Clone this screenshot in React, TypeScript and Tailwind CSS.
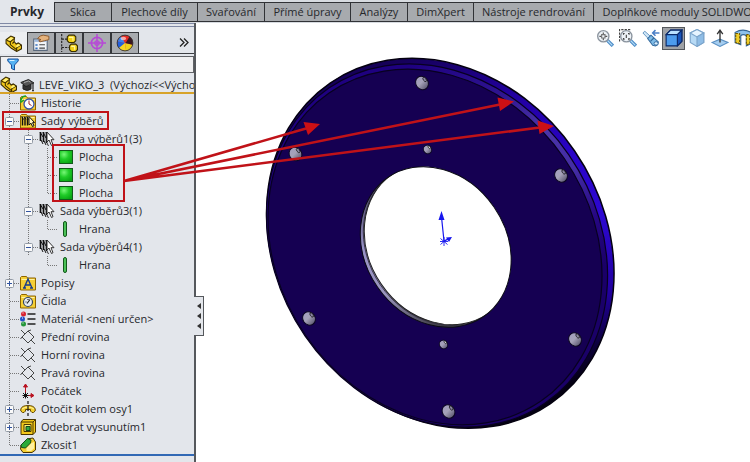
import type { ReactNode } from "react";

const tabs = [
  { label: "Skica", width: "w-[57px]" },
  { label: "Plechové díly", width: "w-[86px]" },
  { label: "Svařování", width: "w-[67px]" },
  { label: "Přímé úpravy", width: "w-[86px]" },
  { label: "Analýzy", width: "w-[57px]" },
  { label: "DimXpert", width: "w-[66px]" },
  { label: "Nástroje rendrování", width: "w-[120px]" },
  { label: "Doplňkové moduly SOLIDWORKS", width: "w-[187px]" },
];

function Icon({ size = 16, children }: { size?: number; children: ReactNode }) {
  return (
    <svg width={size} height={size} viewBox="0 0 16 16" className="block shrink-0" aria-hidden="true">
      {children}
    </svg>
  );
}

function PartIcon() {
  return (
    <Icon size={17}>
      <path d="M1 4.500 5.500 1 9 2.500 8.500 6l2 2.500 2-1 3 2V13l-4.500 2.500L6 12.500 1 8z" fill="#f2c81a" stroke="#3a2c00" />
      <path d="M1.500 5 5 6.500l3.500-3M5 6.500V9l5.500 4.500M8.500 6.500 7 8M11 12v3M11 12l4-2.500" fill="none" stroke="#3a2c00" />
      <path d="M2.500 4.500 5.500 2l2.500 1-3 2.500zM10 10.500l2.500-2 2 1.200-3 1.800z" fill="#fff17a" />
    </Icon>
  );
}

function CapIcon() {
  return (
    <Icon>
      <path d="M3 8v4q4.500 3 8 0V8L8 9.500z" fill="#333" stroke="#222" />
      <path d="M.8 5.500 8.500 2.500 14 6 6 9.500z" fill="#555" stroke="#222" />
      <path d="M13 6.500v6M12 13.500h2" stroke="#333" strokeWidth="1.300" />
      <path d="M4 5.500 8.500 4l2 1.200" stroke="#aaa" fill="none" />
    </Icon>
  );
}

function PropertyIcon() {
  return (
    <Icon size={18}>
      <path d="M1.500 4.500h12v10h-12z" fill="#f3f5f8" stroke="#59687c" />
      <path d="M2 5h11v2H2z" fill="#9db8dc" />
      <path d="M5 4q2-3 5-3l5 1v3l-4 1-4 1-1-1 2-1z" fill="#e5b27c" stroke="#875426" strokeWidth=".8" />
      <path d="M3 9h2v1.500H3zM3 12h2v1.500H3z" fill="#3872bd" />
      <path d="M6.500 9.500h5M6.500 12.500h5" stroke="#444" />
    </Icon>
  );
}

function ConfigIcon() {
  return (
    <Icon size={18}>
      <path d="M1.500 0v16M1.500 4.500H7M1.500 12H8" stroke="#222" fill="none" strokeDasharray="2 1" />
      <path d="M6.500 2.500 8 1h4.500L14 2.500V6l-1.500 1.500H8L6.500 6zM8.500 10.500 10 9h4l1.500 1.500V14L14 15.500h-4L8.500 14z" fill="#f2d21b" stroke="#382e00" />
      <path d="M8 3h3.500v3M10 11h3v3" stroke="#fff8a0" fill="none" />
    </Icon>
  );
}

function TargetIcon() {
  return (
    <Icon size={18}>
      <circle cx="8" cy="8" r="5" fill="none" stroke="#b649d6" strokeWidth="1.500" />
      <circle cx="8" cy="8" r="2" fill="none" stroke="#b649d6" />
      <path d="M8 0v16M0 8h16" stroke="#b649d6" strokeWidth="1.300" />
    </Icon>
  );
}

function AppearanceIcon() {
  return (
    <Icon size={18}>
      <circle cx="8" cy="8" r="7" fill="#e52b25" />
      <path d="M8 8 1.200 6.500A7 7 0 0 0 3 13z" fill="#2260dd" />
      <path d="M1.200 6.500A7 7 0 0 1 5 1.700L8 8z" fill="#3b83ec" />
      <path d="M8 8 2.500 12.500A7 7 0 0 0 9 15z" fill="#f6d623" />
      <path d="M8 8 9 15a7 7 0 0 0 5.800-5.500z" fill="#eed31a" />
      <path d="M8 8 14.800 9.500A7 7 0 0 0 11.500 2z" fill="#391822" />
      <path d="M4 2.500A7 7 0 0 1 12 2.500L8.500 8z" fill="#e52b25" />
      <circle cx="8" cy="8" r="7" fill="none" stroke="#333" strokeWidth=".8" />
      <ellipse cx="6.500" cy="4" rx="2.500" ry="1.500" fill="#fff" opacity=".6" />
    </Icon>
  );
}

function Folder() {
  return (
    <>
      <path d="M.5 2.500 1.500 1.500h5l1 1.500h8v12H.5z" fill="#f5cf35" stroke="#8e6500" />
      <path d="M1.500 4.500h13" stroke="#fff2a0" />
    </>
  );
}

function HistoryIcon() {
  return (
    <Icon>
      <Folder />
      <circle cx="9" cy="9" r="5" fill="#fff" stroke="#3451a5" strokeWidth="1.300" />
      <path d="M9 5.500V9l2.500 1.500" stroke="#9f2626" fill="none" />
      <path d="M1 5q1-4 5-4M0 4l1 3 3-2" fill="none" stroke="#18a52b" strokeWidth="1.500" />
    </Icon>
  );
}

function SetsFolderIcon() {
  return (
    <Icon>
      <Folder />
      <path d="M2.500 3.500v9M5 3.500v9M7.500 3.500v9" stroke="#111" strokeWidth="1.400" />
      <path d="m1.500 3.500 2 3M4 3.500l2 3M6.500 3.500l2 3" stroke="#111" />
      <path d="M9 3.500V12l2-1.800 1.500 3.300 1.500-.8-1.500-3 2-.2z" fill="#fff3c0" stroke="#111" />
    </Icon>
  );
}

function SetIcon() {
  return (
    <Icon>
      <path d="M1.500 1v9M4.500 1v10M7.500 1v11" stroke="#111" strokeWidth="1.700" />
      <path d="m1 1 3 5M4 1l3 6M7 1l3 6M2 9l2 4M5 10l2 4" stroke="#111" />
      <path d="M8 1v10l2-2 2.500 5.500 1.500-.8-2-5h3z" fill="#fff" stroke="#333" />
      <path d="m8 12 1.500 3" stroke="#333" />
    </Icon>
  );
}

function FaceIcon() {
  return (
    <Icon>
      <defs>
        <radialGradient id="face" cx="35%" cy="30%" r="75%">
          <stop offset="0" stopColor="#77f777" />
          <stop offset=".5" stopColor="#20cc28" />
          <stop offset="1" stopColor="#08a514" />
        </radialGradient>
      </defs>
      <rect x="1.500" y="1.500" width="13" height="13" fill="url(#face)" stroke="#12591b" />
    </Icon>
  );
}

function EdgeIcon() {
  return <Icon><rect x="5.500" y=".5" width="3" height="15" rx="1.500" fill="#4bc157" stroke="#12591b" /></Icon>;
}

function NotesIcon() {
  return (
    <Icon>
      <Folder />
      <path d="m4 13 4-9 4 9M5.500 10h5M3 13h3M10 13h3" stroke="#173c8c" fill="none" strokeWidth="1.400" />
    </Icon>
  );
}

function SensorIcon() {
  return (
    <Icon>
      <Folder />
      <circle cx="8" cy="9" r="4.500" fill="#e6edf5" stroke="#35455d" strokeWidth="1.200" />
      <path d="m7 10.500 3-4M5.500 9h1M8 6v1" stroke="#222" strokeWidth="1.200" />
    </Icon>
  );
}

function MaterialIcon() {
  return (
    <Icon>
      <path d="M7.500 3h8M7.500 8h8M7.500 13h8" stroke="#222" strokeWidth="1.500" />
      <circle cx="3.500" cy="3" r="2.500" fill="#d82330" />
      <circle cx="2.500" cy="8" r="2.500" fill="#2350c9" />
      <circle cx="3.500" cy="13" r="2.500" fill="#23963a" />
      <path d="M2.500 2h1M2 7h1M2.500 12h1" stroke="#fff" />
    </Icon>
  );
}

function PlaneIcon() {
  return (
    <Icon>
      <path d="m8 2 6 6-6 6-6-6zM1 1l4 4M11 11l4 4M8 2l3-1M2 8l-1.500 2" stroke="#333" fill="none" strokeWidth=".9" />
    </Icon>
  );
}

function OriginIcon() {
  return (
    <Icon>
      <path d="M5.500 12V2M5 12.500h8M3.500 4l2-3 2 3zM11 10.500l3 2-3 2z" fill="#b91422" stroke="#b91422" />
      <path d="m3 10 5 5M8 10l-5 5M5.500 9.500v6M2.500 12.500h6" stroke="#111" />
    </Icon>
  );
}

function RevolveIcon() {
  return (
    <Icon>
      <path d="M.8 8Q2 4.500 8 4.500T15.200 8v2l-1.700 1.500H12L10.500 10V8.500h-5V10L4 11.500H2.500L.8 10z" fill="#f4cf2c" stroke="#624600" />
      <path d="M2 8q6-4 12 0" stroke="#fff49d" fill="none" />
      <path d="M8 0v3M8 5v5M8 12v3" stroke="#111" strokeWidth="1.200" />
    </Icon>
  );
}

function CutIcon() {
  return (
    <Icon>
      <path d="M1 3 3 .5h12.500V13L13 15.500H1z" fill="#f3c91b" stroke="#493600" />
      <path d="M1 3h12v12.500M13 3l2.500-2.500" stroke="#493600" fill="none" />
      <path d="M4 5.500h7v7H4z" fill="#fff177" stroke="#493600" />
      <path d="M6 7.500h4v4H6z" fill="#33a843" stroke="#12491c" />
    </Icon>
  );
}

function ChamferIcon() {
  return (
    <Icon>
      <path d="M1 8 7 2l6-1 2.500 4v8L12 15.500H3L.5 12z" fill="#f5cf32" stroke="#493600" />
      <path d="M1 8 7.500 1.500 11 3l-.5 3-5 5-4-.5z" fill="#29aa38" stroke="#12491c" />
      <path d="m6.500 11 5-5 2.500-1v6.500L11 14H6.500z" fill="#fff0a0" />
    </Icon>
  );
}

type Guide = "none" | "line" | "tee" | "end" | "plus" | "minus";

function GuideCell({ kind, name }: { kind: Guide; name: string }) {
  if (kind === "none") return <span className="w-[19px]" />;
  const boxed = kind === "plus" || kind === "minus";
  const drawing = (
    <svg width="19" height="18" viewBox="0 0 19 18" className="block" aria-hidden="true">
      <path d={kind === "end" ? "M9.500 0v9" : "M9.500 0v18"} stroke="#777" strokeDasharray="1 1" />
      {kind !== "line" && <path d="M10 9.500h10" stroke="#777" strokeDasharray="1 1" />}
      {boxed && <rect x="5.500" y="5.500" width="8" height="8" rx="1" fill="#fafafa" stroke="#929aa5" />}
      {boxed && <path d={kind === "plus" ? "M7 9.500h5M9.500 7v5" : "M7 9.500h5"} stroke="#3154a0" />}
    </svg>
  );
  return boxed ? <button aria-label={name} className="w-[19px]">{drawing}</button> : <span className="w-[19px]">{drawing}</span>;
}

const rows: { label: string; icon: ReactNode; guides: Guide[] }[] = [
  { label: "Historie", icon: <HistoryIcon />, guides: ["tee"] },
  { label: "Sady výběrů", icon: <SetsFolderIcon />, guides: ["minus"] },
  { label: "Sada výběrů1(3)", icon: <SetIcon />, guides: ["line", "minus"] },
  { label: "Plocha", icon: <FaceIcon />, guides: ["line", "line", "tee"] },
  { label: "Plocha", icon: <FaceIcon />, guides: ["line", "line", "tee"] },
  { label: "Plocha", icon: <FaceIcon />, guides: ["line", "line", "end"] },
  { label: "Sada výběrů3(1)", icon: <SetIcon />, guides: ["line", "minus"] },
  { label: "Hrana", icon: <EdgeIcon />, guides: ["line", "line", "end"] },
  { label: "Sada výběrů4(1)", icon: <SetIcon />, guides: ["line", "minus"] },
  { label: "Hrana", icon: <EdgeIcon />, guides: ["line", "none", "end"] },
  { label: "Popisy", icon: <NotesIcon />, guides: ["plus"] },
  { label: "Čidla", icon: <SensorIcon />, guides: ["tee"] },
  { label: "Materiál <není určen>", icon: <MaterialIcon />, guides: ["tee"] },
  { label: "Přední rovina", icon: <PlaneIcon />, guides: ["tee"] },
  { label: "Horní rovina", icon: <PlaneIcon />, guides: ["tee"] },
  { label: "Pravá rovina", icon: <PlaneIcon />, guides: ["tee"] },
  { label: "Počátek", icon: <OriginIcon />, guides: ["tee"] },
  { label: "Otočit kolem osy1", icon: <RevolveIcon />, guides: ["plus"] },
  { label: "Odebrat vysunutím1", icon: <CutIcon />, guides: ["plus"] },
  { label: "Zkosit1", icon: <ChamferIcon />, guides: ["end"] },
];

const panelTabs = [
  { name: "Vlastnosti", icon: <PropertyIcon /> },
  { name: "Konfigurace", icon: <ConfigIcon /> },
  { name: "Kóty", icon: <TargetIcon /> },
  { name: "Vzhled", icon: <AppearanceIcon /> },
];

function Sidebar() {
  return (
    <aside className="flex w-[196px] shrink-0 flex-col border-r-2 border-[#55585c] bg-[#e3e6eb]">
      <div className="h-1 shrink-0 border-y border-[#8089a5]" />
      <div className="mt-1 flex h-[23px] shrink-0 items-end border-b border-[#3c3e42]">
        <button aria-label="Strom prvků" className="-mb-px flex h-[22px] w-[27px] items-center justify-center bg-[#eceef1]">
          <PartIcon />
        </button>
        {panelTabs.map((t) => (
          <button key={t.name} aria-label={t.name} className="flex h-[21px] w-7 items-center justify-center border-t border-r border-l border-[#34363a] bg-[#a8abaf]">
            {t.icon}
          </button>
        ))}
        <button aria-label="Další" className="ml-auto flex h-[21px] w-5 items-center justify-center">
          <svg width="10" height="9" viewBox="0 0 10 9" aria-hidden="true">
            <path d="m1 .5 4 4-4 4M5 .5l4 4-4 4" fill="none" stroke="#222" strokeWidth="1.300" />
          </svg>
        </button>
      </div>
      <label className="mt-0.5 flex h-[17px] shrink-0 items-center border border-[#606266] bg-[#f0f0f1] pl-1.5">
        <svg width="12" height="13" viewBox="0 0 12 13" aria-hidden="true">
          <path d="M.8 1h10.400v2L7.500 7v5l-3-1.500V7L.8 3z" fill="#55b2f2" stroke="#174f9c" />
          <path d="M2.500 2.500h5" stroke="#d5f1ff" />
        </svg>
        <input aria-label="Filtr" className="min-w-0 flex-1 bg-transparent outline-none" />
      </label>
      <div className="flex h-[21px] shrink-0 items-center overflow-hidden border-b-2 border-[#d7a329] pt-1">
        <PartIcon />
        <span className="mx-[3px]"><CapIcon /></span>
        <span className="whitespace-pre">LEVE_VIKO_3  (Výchozí&lt;&lt;Výchozí&gt;)</span>
      </div>
      <ul className="border-b-2 border-[#3269b5]">
        {rows.map((row, i) => (
          <li key={i} className="flex h-[18px] items-center whitespace-nowrap">
            {row.guides.map((g, j) => <GuideCell key={j} kind={g} name={row.label} />)}
            <span className="mr-[5px] ml-px">{row.icon}</span>
            <span>{row.label}</span>
          </li>
        ))}
      </ul>
    </aside>
  );
}

function ViewCube({ solid }: { solid?: boolean }) {
  return (
    <Icon size={18}>
      <path d={solid ? "M1 5 5 1h10v10l-4 4H1z" : "m8 .5 6 3v8.500l-6 3.500L2 12V3.500z"} fill={solid ? "#4d9ced" : "#b7daf5"} stroke={solid ? "#0a2868" : "#7ca5cb"} />
      <path d={solid ? "M1 5 5 1h10l-4 4z" : "m2 3.500 6-3 6 3L8 7z"} fill={solid ? "#b9e1ff" : "#e6f4ff"} stroke={solid ? "#0a2868" : "#7ca5cb"} />
      <path d={solid ? "M11 5v10l4-4V1z" : "M8 7v8.500l6-3.500V3.500z"} fill={solid ? "#1754bb" : "#8fbde6"} stroke={solid ? "#0a2868" : "#7ca5cb"} />
    </Icon>
  );
}

function Magnifier({ area }: { area?: boolean }) {
  return (
    <Icon size={18}>
      <path d="m10 10 5 5" stroke="#4d8cc7" strokeWidth="3" />
      <path d="m10 10 4.500 4.500" stroke="#b3dbf7" />
      {area && <path d="M.5 11V.5H11" fill="none" stroke="#444" strokeDasharray="2 1" />}
      <circle cx="6.500" cy="6.500" r="5" fill="#edf2f7" stroke="#8b949e" strokeWidth="1.200" />
      {area ? (
        <path d="M4 5V4h1M8 4h1v1M4 8v1h1M8 9h1V8M6.500 5v3" stroke="#444" fill="none" />
      ) : (
        <>
          <path d="M6.500 3v7M3 6.500h7" stroke="#555" />
          <path d="M5 5h3v3H5z" fill="#edf2f7" stroke="#777" />
        </>
      )}
    </Icon>
  );
}

function ViewToolbar() {
  const button = "flex size-[23px] shrink-0 items-center justify-center";
  return (
    <div className="flex h-[30px] items-center justify-end overflow-hidden">
      <div className="-mr-1 flex shrink-0">
        <button aria-label="Přizpůsobit" className={button}><Magnifier /></button>
        <button aria-label="Zvětšit oblast" className={button}><Magnifier area /></button>
        <button aria-label="Předchozí pohled" className={button}>
          <Icon size={18}>
            <path d="M.8 3.500 2.500 2 8 7l-2 2z" fill="#cfe6f7" stroke="#5b90bd" strokeWidth=".8" />
            <path d="m5 8.500 3-3 6.500 6-.5 2.500-2 1-2.500-.5z" fill="#7fbce8" stroke="#346a9d" strokeWidth=".9" />
            <path d="m7.500 11 3-3" stroke="#346a9d" />
            <ellipse cx="12.500" cy="12.800" rx="1.800" ry="1.500" fill="#d9efff" stroke="#346a9d" strokeWidth=".8" />
            <path d="M15.500 3.500H10M12 1 9.500 3.500 12 6" fill="none" stroke="#4b7fc6" strokeWidth="1.400" />
          </Icon>
        </button>
        <button aria-label="Pohled zepředu" className="flex size-[23px] shrink-0 items-center justify-center border border-[#55585c] bg-[#9fa2a6]"><ViewCube solid /></button>
        <button aria-label="Izometrie" className={button}><ViewCube /></button>
        <button aria-label="Kolmo k" className={button}>
          <Icon size={18}>
            <path d="m1 12 7-3 7 3-7 3.500z" fill="#a4cdf0" stroke="#5b91c4" />
            <path d="M8 12V2M5.500 4.500 8 1l2.500 3.500" stroke="#333" fill="none" strokeWidth="1.200" />
          </Icon>
        </button>
        <button aria-label="Řez" className={button}>
          <Icon size={18}>
            <path d="M1 3q7-4 14 0v10l-4 2V6q-3-2-5 0v8l-5-2z" fill="#8dc1ec" stroke="#346595" />
            <path d="M1.500 4H5v9l-3.500-1z" fill="#f1ce28" stroke="#715900" strokeDasharray="2 1" />
            <path d="M11 5h3v8l-3 1z" fill="#f1ce28" stroke="#715900" strokeDasharray="2 1" />
          </Icon>
        </button>
      </div>
    </div>
  );
}

const holes = [
  [422, 82, 7], [295.5, 153, 7], [309, 317.5, 7], [448.5, 410.5, 7], [575, 338.5, 7], [561, 174.5, 7],
  [427.5, 148.500, 4.500], [443.5, 343.5, 4.500],
];

function Model() {
  return (
    <svg width="554" height="410" viewBox="196 52 554 410" className="block" role="img" aria-label="Model víka">
      <defs>
        <linearGradient id="rim" gradientUnits="userSpaceOnUse" gradientTransform="rotate(-55.5) translate(-440.3 -242.3)" x1="370" y1="70" x2="500" y2="410">
          <stop offset="0" stopColor="#150058" />
          <stop offset=".2" stopColor="#2200a0" />
          <stop offset=".42" stopColor="#2a04c8" />
          <stop offset=".6" stopColor="#2d08d0" />
          <stop offset=".8" stopColor="#2200a0" />
          <stop offset=".93" stopColor="#0c0038" />
          <stop offset="1" stopColor="#040012" />
        </linearGradient>
        <linearGradient id="step" gradientUnits="userSpaceOnUse" gradientTransform="rotate(-55.5) translate(-437 -244.5)" x1="410" y1="65" x2="605" y2="265">
          <stop offset="0" stopColor="#1e0080" />
          <stop offset=".3" stopColor="#2e1490" />
          <stop offset=".5" stopColor="#4a34a8" />
          <stop offset=".68" stopColor="#432ca4" />
          <stop offset=".85" stopColor="#260783" />
          <stop offset="1" stopColor="#1a0068" />
        </linearGradient>
        <linearGradient id="bore" gradientUnits="userSpaceOnUse" gradientTransform="rotate(-55.5) translate(-435.7 -246)" x1="370" y1="170" x2="440" y2="326">
          <stop offset="0" stopColor="#343048" />
          <stop offset=".4" stopColor="#9993c8" />
          <stop offset=".7" stopColor="#9a95bd" />
          <stop offset="1" stopColor="#3c3a42" />
        </linearGradient>
        <linearGradient id="hole" gradientTransform="rotate(-55.5 .5 .5)" x1=".1" y1=".1" x2=".9" y2=".9">
          <stop offset="0" stopColor="#a29ec0" />
          <stop offset=".45" stopColor="#a5a2b8" />
          <stop offset="1" stopColor="#55526a" />
        </linearGradient>
        <clipPath id="opening">
          <ellipse rx="84.500" ry="70.700" transform="translate(435.7 246) rotate(55.5)" />
        </clipPath>
      </defs>
      <ellipse rx="194.500" ry="163" transform="translate(440.3 242.3) rotate(55.5)" fill="url(#rim)" stroke="#04000f" strokeWidth="1.500" />
      <ellipse rx="191" ry="160" transform="translate(437 244.5) rotate(55.5)" fill="url(#step)" stroke="#080020" strokeWidth="1.200" />
      <ellipse rx="187" ry="156.700" transform="translate(435 246) rotate(55.5)" fill="#150052" stroke="#080020" strokeWidth="1.200" />
      <ellipse rx="84.500" ry="70.700" transform="translate(435.7 246) rotate(55.5)" fill="url(#bore)" />
      <g clipPath="url(#opening)">
        <ellipse rx="84.500" ry="70.700" transform="translate(438.7 244) rotate(55.5)" fill="none" stroke="#33303f" strokeWidth=".8" />
        <ellipse rx="84.500" ry="70.700" transform="translate(439.7 243.3) rotate(55.5)" fill="#fff" stroke="#222" />
      </g>
      <ellipse rx="84.500" ry="70.700" transform="translate(435.7 246) rotate(55.5)" fill="none" stroke="#0a0a14" />
      {holes.map(([x, y, r]) => (
        <g key={`${x}-${y}`} transform={`translate(${x} ${y}) rotate(55.5)`}>
          <ellipse rx={r} ry={r * 0.88} fill="url(#hole)" stroke="#0b0620" />
          <ellipse cx={-r * 0.2} cy={-r * 0.6} rx={r * 0.35} ry={r * 0.2} fill={r < 5 ? "#eee" : "#8884a0"} stroke="#111" strokeWidth=".7" />
        </g>
      ))}
      <g stroke="#1717ee" fill="#1717ee">
        <path d="M444 240 441.500 216M444 240l5-2" strokeWidth="1.200" />
        <path d="m441.500 210-3 9h6zM452 236l-6 .5 3 4.500z" stroke="none" />
        <path d="m440.500 237.500 7 6M447.500 237.500l-7 6M444 236v9M440 240.500h8" strokeWidth=".9" />
      </g>
    </svg>
  );
}

function Annotations() {
  return (
    <svg width="750" height="462" viewBox="0 0 750 462" className="pointer-events-none absolute top-0 left-0" aria-hidden="true">
      <g fill="none" stroke="#c01218" strokeWidth="2">
        <rect x="3" y="112" width="105" height="17" />
        <rect x="53" y="145" width="71" height="56" />
        <path d="M124 181 306 128.500M124 181 500 104.500M124 181 540 127.500" strokeWidth="2.500" />
      </g>
      <path d="m320 124-16.500-2 4.500 13zM514 101.500l-16.500-4 2.500 13.500zM554 126l-16.500-5.500 2 13.500z" fill="#cc1015" />
    </svg>
  );
}

export default function App() {
  return (
    <div className="relative flex min-h-screen flex-col overflow-hidden bg-white font-['Open_Sans','Noto_Sans',sans-serif] text-[11px] leading-[16px] text-[#26282c]">
      <nav className="flex h-[23px] shrink-0 overflow-hidden bg-[#d7dbe0]">
        <button className="w-[54px] shrink-0 bg-[#e3e6eb] text-[12px] font-bold">Prvky</button>
        {tabs.map((t) => (
          <button key={t.label} className={`${t.width} mt-0.5 h-[20px] shrink-0 overflow-hidden border-y border-l border-[#303236] bg-[#a7aaae] whitespace-nowrap`}>
            {t.label}
          </button>
        ))}
      </nav>
      <div className="flex flex-1">
        <Sidebar />
        <main className="relative min-w-0 flex-1">
          <ViewToolbar />
          <Model />
          <button aria-label="Sbalit panel" className="absolute top-[273px] -left-0.5 flex h-10 w-[10px] flex-col items-center justify-around border border-l-0 border-[#55585c] bg-[#e3e6eb] py-1">
            {[0, 1, 2].map((i) => (
              <svg key={i} width="4" height="6" viewBox="0 0 4 6" aria-hidden="true"><path d="M4 0v6L0 3z" fill="#333" /></svg>
            ))}
          </button>
        </main>
      </div>
      <Annotations />
    </div>
  );
}
